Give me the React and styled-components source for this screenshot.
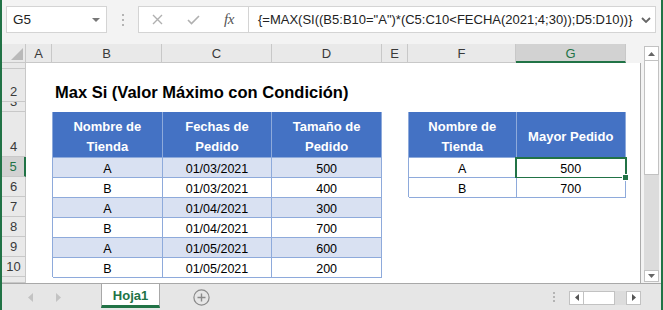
import React from "react";
import styled, { createGlobalStyle, css } from "styled-components";

const GREEN = "#217346";
const HEAD_BLUE = "#4472c4";
const LINE = "#8eaadb";
const BAND = "#d9e1f2";
const GRID_LINE = "#c8c8c8";
const HEAD_BG = "#e9e9e9";
const HEAD_ACTIVE = "#d2d2d2";

const GlobalStyle = createGlobalStyle`
  *, *::before, *::after { box-sizing: border-box; }
  html, body { margin: 0; padding: 0; background: #ffffff; }
  body { font-family: "Liberation Sans", Arial, sans-serif; }
`;

const Window = styled.div`
  width: 663px;
  height: 310px;
  border-left: 2px solid ${GREEN};
  border-right: 2px solid ${GREEN};
  background: #f3f3f3;
  display: flex;
  flex-direction: column;
  overflow: hidden;
`;

/* ---------- formula bar ---------- */
const TopBar = styled.div`
  height: 44px;
  flex: none;
  display: flex;
  align-items: flex-start;
  padding: 6px 5px 0 4px;
`;

const NameBox = styled.div`
  width: 101px;
  height: 27px;
  border: 1px solid #d4d4d4;
  background: #fff;
  display: flex;
  align-items: center;
  justify-content: space-between;
  padding: 0 6px 0 6px;
  font-size: 13.5px;
  color: #222;
`;

const Splitter = styled.div`
  width: 31px;
  height: 27px;
  display: flex;
  flex-direction: column;
  align-items: center;
  justify-content: center;
  gap: 3px;
`;

const SplitDot = styled.span`
  width: 2px;
  height: 2px;
  background: #b4b4b4;
`;

const EditButtons = styled.div`
  width: 110px;
  height: 27px;
  border: 1px solid #d4d4d4;
  border-right: none;
  background: #fff;
  display: grid;
  grid-template-columns: repeat(3, 36px);
  align-items: center;
  justify-items: center;
`;

const Fx = styled.span`
  font-family: "Liberation Serif", "DejaVu Serif", serif;
  font-style: italic;
  font-size: 15px;
  color: #555;
  letter-spacing: -0.5px;
`;

const FormulaInput = styled.div`
  flex: 1;
  height: 27px;
  border: 1px solid #d4d4d4;
  background: #fff;
  display: flex;
  align-items: center;
  justify-content: space-between;
  padding: 0 4px 0 9px;
  font-size: 13px;
  color: #222;
  white-space: nowrap;
`;

/* ---------- sheet ---------- */
const Main = styled.div`
  flex: 1;
  min-height: 0;
  display: flex;
`;

const Sheet = styled.div`
  width: 639px;
  flex: none;
  display: grid;
  grid-template-columns: 24px 26px 110px 110px 110px 26px 108px 110px 15px;
  grid-template-rows: 19px 6px 33px 10px 45px repeat(6, 20px) 1fr;
`;

const Canvas = styled.div`
  grid-column: 2 / -1;
  grid-row: 2 / -1;
  background: #fff;
  border-right: 1px solid #ababab;
`;

const Corner = styled.div`
  grid-column: 1;
  grid-row: 1;
  background: ${HEAD_BG};
  border-right: 1px solid ${GRID_LINE};
  border-bottom: 1px solid ${GRID_LINE};
  display: flex;
  align-items: flex-end;
  justify-content: flex-end;
  padding: 0 2px 2px 0;
`;

const ColHead = styled.div`
  grid-row: 1;
  grid-column: ${(p) => p.$col};
  background: ${(p) => (p.$active ? HEAD_ACTIVE : HEAD_BG)};
  color: ${(p) => (p.$active ? GREEN : "#3a3a3a")};
  border-right: 1px solid ${GRID_LINE};
  border-bottom: ${(p) => (p.$active ? `2px solid ${GREEN}` : `1px solid ${GRID_LINE}`)};
  display: flex;
  align-items: center;
  justify-content: center;
  padding-top: ${(p) => (p.$active ? "1px" : "0")};
  font-size: 13px;
`;

const RowHead = styled.div`
  grid-column: 1;
  grid-row: ${(p) => p.$row};
  background: ${(p) => (p.$active ? HEAD_ACTIVE : HEAD_BG)};
  color: ${(p) => (p.$active ? GREEN : "#3a3a3a")};
  border-right: ${(p) => (p.$active ? `2px solid ${GREEN}` : `1px solid ${GRID_LINE}`)};
  border-bottom: 1px solid ${GRID_LINE};
  display: flex;
  align-items: flex-end;
  justify-content: center;
  overflow: hidden;
  font-size: 13px;
  line-height: 18px;
`;

const Title = styled.div`
  grid-column: 3 / -1;
  grid-row: 3;
  display: flex;
  align-items: flex-end;
  padding-left: 3px;
  font-size: 16.5px;
  font-weight: 700;
  line-height: 20px;
  color: #000;
  white-space: nowrap;
`;

const DataTable = styled.div`
  grid-column: ${(p) => p.$cols};
  grid-row: ${(p) => p.$rows};
  display: grid;
  grid-template-columns: ${(p) => p.$template};
  grid-template-rows: 1fr;
  grid-auto-rows: 20px;
  border-left: 1px solid ${LINE};
`;

const HeadCell = styled.div`
  background: ${HEAD_BLUE};
  color: #fff;
  font-weight: 700;
  font-size: 13px;
  line-height: 20px;
  text-align: center;
  display: flex;
  align-items: center;
  justify-content: center;
  padding-top: 5px;
  border-right: 1px solid ${LINE};
  border-bottom: 1px solid ${LINE};
`;

const Cell = styled.div`
  position: relative;
  background: ${(p) => (p.$band ? BAND : "#fff")};
  border-right: 1px solid ${LINE};
  border-bottom: 1px solid ${LINE};
  display: flex;
  align-items: center;
  justify-content: center;
  padding-top: 2px;
  font-size: 12.5px;
  color: #000;
  ${(p) =>
    p.$selected &&
    css`
      &::after {
        content: "";
        position: absolute;
        left: -2px;
        top: -1px;
        right: -2px;
        bottom: -2px;
        border: 2px solid ${GREEN};
      }
      &::before {
        content: "";
        position: absolute;
        right: -4px;
        bottom: -4px;
        width: 7px;
        height: 7px;
        background: ${GREEN};
        border: 1px solid #fff;
        z-index: 1;
      }
    `}
`;

/* ---------- scrollbars ---------- */
const VScrollArea = styled.div`
  flex: 1;
  display: flex;
  padding: 2px 0 1px 3px;
`;

const VScroll = styled.div`
  width: 15px;
  display: flex;
  flex-direction: column;
  background: #dcdcdc;
`;

const ArrowBox = styled.div`
  flex: none;
  width: ${(p) => p.$w || 15}px;
  height: ${(p) => p.$h || 15}px;
  background: #fff;
  border: 1px solid #c2c2c2;
  display: flex;
  align-items: center;
  justify-content: center;
`;

const VThumb = styled.div`
  flex: none;
  height: 114px;
  background: #fff;
  border: 1px solid #c2c2c2;
  border-top: none;
`;

const Track = styled.div`
  flex: 1;
`;

/* ---------- tab bar ---------- */
const TabBar = styled.div`
  height: 27px;
  flex: none;
  display: flex;
  align-items: stretch;
  background: #e6e6e6;
  border-top: 1px solid #a8a8a8;
`;

const TabNav = styled.div`
  width: 99px;
  display: flex;
  align-items: center;
  padding-left: 26px;
  gap: 23px;
`;

const SheetTab = styled.div`
  width: 59px;
  background: #fff;
  border-left: 1px solid #a8a8a8;
  border-right: 1px solid #a8a8a8;
  border-bottom: 3px solid ${GREEN};
  margin-bottom: 2px;
  display: flex;
  align-items: center;
  justify-content: center;
  padding-top: 2px;
  color: ${GREEN};
  font-weight: 700;
  font-size: 13px;
`;

const AddSheet = styled.div`
  display: flex;
  align-items: center;
  margin-left: 33px;
  padding-top: 1px;
`;

const Spacer = styled.div`
  flex: 1;
`;

const VDots = styled.div`
  display: flex;
  flex-direction: column;
  justify-content: center;
  gap: 2px;
`;

const HScroll = styled.div`
  align-self: center;
  margin: 1px 20px 0 14px;
  width: 72px;
  height: 14px;
  display: flex;
  background: #dcdcdc;
`;

const HThumb = styled.div`
  width: 31px;
  background: #fff;
  border: 1px solid #c2c2c2;
  border-left: none;
`;

const table1 = [
  ["A", "01/03/2021", "500"],
  ["B", "01/03/2021", "400"],
  ["A", "01/04/2021", "300"],
  ["B", "01/04/2021", "700"],
  ["A", "01/05/2021", "600"],
  ["B", "01/05/2021", "200"],
];

const table2 = [
  ["A", "500"],
  ["B", "700"],
];

const columns = ["A", "B", "C", "D", "E", "F", "G"];
const rows = [
  { n: "1" },
  { n: "2" },
  { n: "3" },
  { n: "4" },
  { n: "5", active: true },
  { n: "6" },
  { n: "7" },
  { n: "8" },
  { n: "9" },
  { n: "10" },
  { n: "" },
];

const Tri = ({ dir, color = "#666", w = 7, h = 4 }) => {
  const pts = {
    up: `0,${h} ${w / 2},0 ${w},${h}`,
    down: `0,0 ${w},0 ${w / 2},${h}`,
    left: `${w},0 ${w},${h} 0,${h / 2}`,
    right: `0,0 ${w},${h / 2} 0,${h}`,
  }[dir];
  return (
    <svg width={w} height={h} viewBox={`0 0 ${w} ${h}`}>
      <polygon points={pts} fill={color} />
    </svg>
  );
};

export default function App() {
  return (
    <>
      <GlobalStyle />
      <Window>
        <TopBar>
          <NameBox>
            <span>G5</span>
            <Tri dir="down" color="#777" w={8} h={4} />
          </NameBox>
          <Splitter>
            <SplitDot />
            <SplitDot />
            <SplitDot />
          </Splitter>
          <EditButtons>
            <svg width="11" height="11" viewBox="0 0 11 11">
              <path d="M1 1 L10 10 M10 1 L1 10" stroke="#b0b0b0" strokeWidth="1.4" fill="none" />
            </svg>
            <svg width="13" height="10" viewBox="0 0 13 10">
              <polyline points="1,5 4.5,8.5 12,1" stroke="#b0b0b0" strokeWidth="1.6" fill="none" />
            </svg>
            <Fx>fx</Fx>
          </EditButtons>
          <FormulaInput>
            <span>{'{=MAX(SI((B5:B10="A")*(C5:C10<FECHA(2021;4;30));D5:D10))}'}</span>
            <svg width="10" height="6" viewBox="0 0 10 6">
              <polyline points="1,1 5,5 9,1" stroke="#666" strokeWidth="1.8" fill="none" />
            </svg>
          </FormulaInput>
        </TopBar>

        <Main>
          <Sheet>
            <Canvas />
            <Corner>
              <svg width="12" height="12" viewBox="0 0 12 12">
                <polygon points="12,0 12,12 0,12" fill="#b9b9b9" />
              </svg>
            </Corner>
            {columns.map((c, i) => (
              <ColHead key={c} $col={i + 2} $active={c === "G"}>
                {c}
              </ColHead>
            ))}
            {rows.map((r, i) => (
              <RowHead key={i} $row={i + 2} $active={r.active}>
                <span>{r.n}</span>
              </RowHead>
            ))}

            <Title>Max Si (Valor Máximo con Condición)</Title>

            <DataTable $cols="3 / 6" $rows="5 / 12" $template="repeat(3, 1fr)">
              <HeadCell>
                Nombre de
                <br />
                Tienda
              </HeadCell>
              <HeadCell>
                Fechas de
                <br />
                Pedido
              </HeadCell>
              <HeadCell>
                Tamaño de
                <br />
                Pedido
              </HeadCell>
              {table1.map((row, ri) =>
                row.map((v, ci) => (
                  <Cell key={`${ri}-${ci}`} $band={ri % 2 === 0}>
                    {v}
                  </Cell>
                ))
              )}
            </DataTable>

            <DataTable $cols="7 / 9" $rows="5 / 8" $template="108fr 110fr">
              <HeadCell>
                Nombre de
                <br />
                Tienda
              </HeadCell>
              <HeadCell>Mayor Pedido</HeadCell>
              {table2.map((row, ri) =>
                row.map((v, ci) => (
                  <Cell key={`${ri}-${ci}`} $selected={ri === 0 && ci === 1}>
                    {v}
                  </Cell>
                ))
              )}
            </DataTable>
          </Sheet>

          <VScrollArea>
            <VScroll>
              <ArrowBox>
                <Tri dir="up" />
              </ArrowBox>
              <VThumb />
              <Track />
              <ArrowBox $h={12}>
                <Tri dir="down" />
              </ArrowBox>
            </VScroll>
          </VScrollArea>
        </Main>

        <TabBar>
          <TabNav>
            <Tri dir="left" color="#c3c3c3" w={5} h={9} />
            <Tri dir="right" color="#c3c3c3" w={5} h={9} />
          </TabNav>
          <SheetTab>Hoja1</SheetTab>
          <AddSheet>
            <svg width="17" height="17" viewBox="0 0 17 17">
              <circle cx="8.5" cy="8.5" r="7.6" stroke="#8a8a8a" strokeWidth="1.2" fill="none" />
              <path d="M8.5 4.5 V12.5 M4.5 8.5 H12.5" stroke="#8a8a8a" strokeWidth="1.4" />
            </svg>
          </AddSheet>
          <Spacer />
          <VDots>
            <SplitDot />
            <SplitDot />
            <SplitDot />
          </VDots>
          <HScroll>
            <ArrowBox $h={14}>
              <Tri dir="left" color="#555" w={4} h={7} />
            </ArrowBox>
            <HThumb />
            <Track />
            <ArrowBox $h={14}>
              <Tri dir="right" color="#555" w={4} h={7} />
            </ArrowBox>
          </HScroll>
        </TabBar>
      </Window>
    </>
  );
}
